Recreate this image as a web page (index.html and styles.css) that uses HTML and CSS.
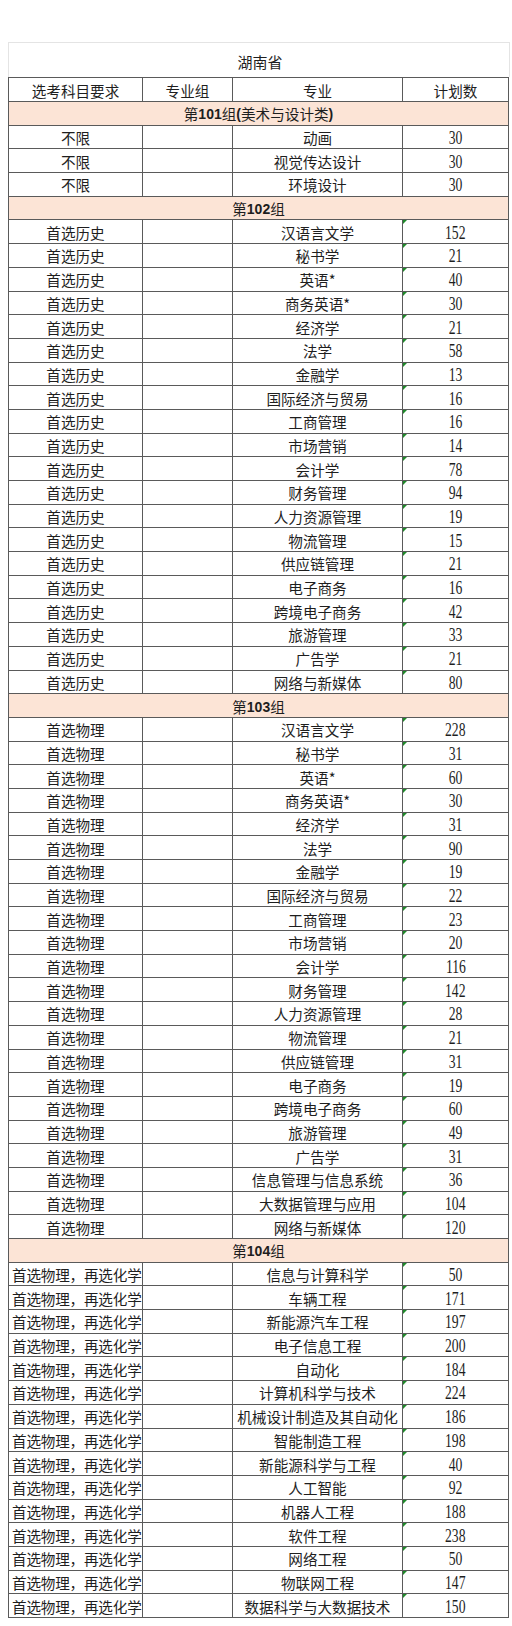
FILE: index.html
```html
<!DOCTYPE html>
<html lang="zh-CN">
<head>
<meta charset="utf-8">
<title>湖南省</title>
<link rel="stylesheet" href="styles.css">
</head>
<body>
<div class="sheet">
  <div class="title">湖南省</div>
  <div class="plan" id="plan" role="table">
    <div class="cell head" role="columnheader">选考科目要求</div>
    <div class="cell head" role="columnheader">专业组</div>
    <div class="cell head" role="columnheader">专业</div>
    <div class="cell head" role="columnheader">计划数</div>
  </div>
</div>
<script src="app.js"></script>
</body>
</html>
```

FILE: app.js
```js
var groups = [
  { no: "101", sub: "美术与设计类", req: "不限", flag: false, rows: [
    ["动画", 30], ["视觉传达设计", 30], ["环境设计", 30]
  ]},
  { no: "102", sub: "", req: "首选历史", flag: true, rows: [
    ["汉语言文学", 152], ["秘书学", 21], ["英语*", 40], ["商务英语*", 30], ["经济学", 21],
    ["法学", 58], ["金融学", 13], ["国际经济与贸易", 16], ["工商管理", 16], ["市场营销", 14],
    ["会计学", 78], ["财务管理", 94], ["人力资源管理", 19], ["物流管理", 15], ["供应链管理", 21],
    ["电子商务", 16], ["跨境电子商务", 42], ["旅游管理", 33], ["广告学", 21], ["网络与新媒体", 80]
  ]},
  { no: "103", sub: "", req: "首选物理", flag: true, rows: [
    ["汉语言文学", 228], ["秘书学", 31], ["英语*", 60], ["商务英语*", 30], ["经济学", 31],
    ["法学", 90], ["金融学", 19], ["国际经济与贸易", 22], ["工商管理", 23], ["市场营销", 20],
    ["会计学", 116], ["财务管理", 142], ["人力资源管理", 28], ["物流管理", 21], ["供应链管理", 31],
    ["电子商务", 19], ["跨境电子商务", 60], ["旅游管理", 49], ["广告学", 31], ["信息管理与信息系统", 36],
    ["大数据管理与应用", 104], ["网络与新媒体", 120]
  ]},
  { no: "104", sub: "", req: "首选物理，再选化学", flag: true, rows: [
    ["信息与计算科学", 50], ["车辆工程", 171], ["新能源汽车工程", 197], ["电子信息工程", 200],
    ["自动化", 184], ["计算机科学与技术", 224], ["机械设计制造及其自动化", 186], ["智能制造工程", 198],
    ["新能源科学与工程", 40], ["人工智能", 92], ["机器人工程", 188], ["软件工程", 238],
    ["网络工程", 50], ["物联网工程", 147], ["数据科学与大数据技术", 150]
  ]}
];

var html = "";
groups.forEach(function (g) {
  var sub = g.sub ? '<span class="lat">(</span>' + g.sub + '<span class="lat">)</span>' : "";
  html += '<div class="cell grp" role="cell">第<span class="lat">' + g.no + '</span>组' + sub + '</div>';
  g.rows.forEach(function (r) {
    var long = g.req.length > 6 ? " long" : "";
    html += '<div class="cell req' + long + '" role="cell">' + g.req + '</div>' +
      '<div class="cell" role="cell"></div>' +
      '<div class="cell" role="cell">' + r[0] + '</div>' +
      '<div class="cell num' + (g.flag ? " flag" : "") + '" role="cell"><span class="n">' + r[1] + '</span></div>';
  });
});
document.getElementById("plan").insertAdjacentHTML("beforeend", html);
```

FILE: styles.css
```css
html, body {
  margin: 0;
  padding: 0;
  background: #ffffff;
}

body {
  font-family: "Noto Sans CJK SC", sans-serif;
  color: #1e1e1e;
}

.sheet {
  width: 502px;
  margin: 42px 0 0 8px;
}

.title {
  height: 35px;
  box-sizing: border-box;
  border: 1px solid #e4e4e4;
  border-bottom: none;
  display: flex;
  align-items: center;
  justify-content: center;
  font-size: 15px;
  padding: 3px 0 0 2px;
}

.plan {
  width: 501px;
  box-sizing: border-box;
  display: grid;
  grid-template-columns: 134px 90px 170px 106px;
  grid-template-rows: 24px;
  grid-auto-rows: 23.7px;
  border-left: 1px solid #5a5a5a;
  border-top: 1px solid #5a5a5a;
  font-size: 14.6px;
}

.cell {
  box-sizing: border-box;
  border-right: 1px solid #5a5a5a;
  border-bottom: 1px solid #5a5a5a;
  display: flex;
  align-items: center;
  justify-content: center;
  padding-top: 2px;
  white-space: nowrap;
  line-height: 16px;
  min-width: 0;
}

.req.long {
  justify-content: flex-start;
  padding-left: 3px;
  letter-spacing: -0.2px;
}

.grp {
  grid-column: 1 / -1;
  background: #fce4d6;
}

.lat {
  font-family: "Liberation Sans", Arial, sans-serif;
  font-weight: bold;
  font-size: 14px;
}

.num {
  position: relative;
}

.n {
  display: inline-block;
  font-family: "Liberation Serif", "Times New Roman", serif;
  font-size: 19px;
  transform: scaleX(0.72);
}

.flag::before {
  content: "";
  position: absolute;
  left: 0;
  top: 0;
  width: 0;
  height: 0;
  border-top: 4px solid #1f8a2a;
  border-right: 4px solid transparent;
}
```
